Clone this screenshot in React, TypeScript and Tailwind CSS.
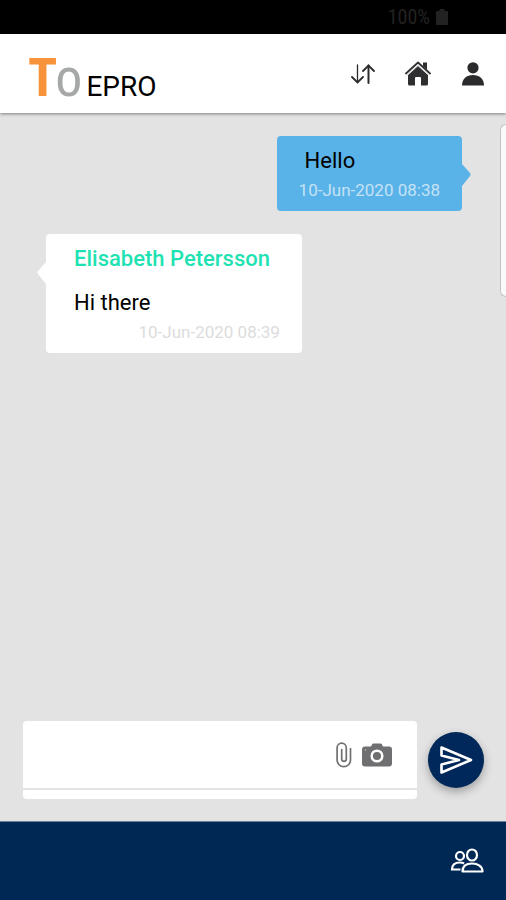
import { useState } from "react";

type Message = {
  id: number;
  text: string;
  sentAt: string;
  author?: string;
};

const messages: Message[] = [
  { id: 1, text: "Hello", sentAt: "10-Jun-2020 08:38" },
  { id: 2, text: "Hi there", sentAt: "10-Jun-2020 08:39", author: "Elisabeth Petersson" },
];

export default function App() {
  const [draft, setDraft] = useState("");

  return (
    <div className="flex min-h-screen flex-col bg-[#e3e3e3] font-[Roboto,sans-serif] text-black">
      <StatusBar />
      <Header />

      <main className="relative flex flex-1 flex-col pt-[23px]">
        <ul className="flex flex-1 flex-col gap-[23px] pr-11 pl-[46px]">
          {messages.map((m) =>
            m.author ? <Received key={m.id} message={m} /> : <Sent key={m.id} message={m} />
          )}
        </ul>

        {/* edge panel handle */}
        <div className="absolute top-[11px] right-0 h-[173px] w-1.5 rounded-l-md border border-r-0 border-[#c4c4c4] bg-[#fafafa]" />

        <form
          className="flex items-center gap-[11px] pr-[22px] pb-[22px] pl-[23px]"
          onSubmit={(e) => {
            e.preventDefault();
            setDraft("");
          }}
        >
          <div className="min-w-0 flex-1 rounded bg-white pb-[9px]">
            <div className="flex h-[69px] items-center gap-2 border-b-2 border-[#e3e3e3] pr-6 pl-4">
              <input
                type="text"
                aria-label="Message"
                value={draft}
                onChange={(e) => setDraft(e.target.value)}
                className="min-w-0 flex-1 bg-transparent text-[22px] outline-none"
              />
              <button type="button" aria-label="Attach file">
                <ClipIcon />
              </button>
              <button type="button" aria-label="Take photo">
                <CameraIcon />
              </button>
            </div>
          </div>
          <button
            type="submit"
            aria-label="Send"
            className="flex size-14 shrink-0 items-center justify-center rounded-full bg-[#00285a] shadow-[0_4px_10px_rgba(0,0,0,0.3)]"
          >
            <SendIcon />
          </button>
        </form>
      </main>

      <footer className="flex h-[79px] items-center justify-end border-t border-[#6b7f9b] bg-[#002855] pr-[22px]">
        <button type="button" aria-label="Participants">
          <GroupIcon />
        </button>
      </footer>
    </div>
  );
}

function StatusBar() {
  return (
    <div className="flex h-[34px] items-center justify-end gap-1.5 bg-black pr-[58px] text-[#222222]">
      <span className="font-['Roboto_Condensed',Roboto,sans-serif] text-[20px] leading-6">
        100%
      </span>
      <svg width="12" height="16" viewBox="0 0 12 16" fill="currentColor" aria-hidden="true">
        <path d="M3.5 0h5v2H11a1 1 0 0 1 1 1v12a1 1 0 0 1-1 1H1a1 1 0 0 1-1-1V3a1 1 0 0 1 1-1h2.5z" />
      </svg>
    </div>
  );
}

function Header() {
  return (
    <header className="z-10 flex h-[79px] items-center justify-between bg-white pr-[21px] pl-7 shadow-[0_1px_3px_rgba(0,0,0,0.45)]">
      <h1 className="flex items-baseline gap-1 pt-2">
        <span className="flex items-baseline font-['Roboto_Condensed',Roboto,sans-serif] text-[54px] leading-[54px] font-bold">
          <span className="text-[#f7933a]">T</span>
          <span className="-ml-0.5 font-normal text-[#a6a8a8]">o</span>
        </span>
        <span className="text-[28px] leading-8">EPRO</span>
      </h1>
      <nav className="flex items-center gap-[30px]">
        <button type="button" aria-label="Sync">
          <SortIcon />
        </button>
        <button type="button" aria-label="Home">
          <HomeIcon />
        </button>
        <button type="button" aria-label="Profile">
          <PersonIcon />
        </button>
      </nav>
    </header>
  );
}

function Sent({ message }: { message: Message }) {
  return (
    <li className="relative self-end rounded bg-[#5ab3e8] px-[22px] pt-3 pb-2.5">
      <p className="pl-1.5 text-[22px] leading-[26px]">{message.text}</p>
      <p className="pt-[5px] text-[17px] leading-[22px] text-[#c5e2f5]">{message.sentAt}</p>
      <svg
        className="absolute top-7 left-full"
        width="10"
        height="22"
        viewBox="0 0 10 22"
        aria-hidden="true"
      >
        <path d="M0 0L8 9q1.500 1.500 0 3L0 22z" fill="#5ab3e8" />
      </svg>
    </li>
  );
}

function Received({ message }: { message: Message }) {
  return (
    <li className="relative self-start rounded bg-white pt-3 pr-8 pb-2.5 pl-7">
      <p className="text-[22px] leading-[26px] font-medium text-[#1fe2b2]">{message.author}</p>
      <p className="pt-[18px] text-[22px] leading-[26px]">{message.text}</p>
      <p className="-mr-2.5 pt-[5px] text-right text-[17px] leading-[22px] text-[#dcdcdc]">
        {message.sentAt}
      </p>
      <svg
        className="absolute top-7 right-full"
        width="10"
        height="22"
        viewBox="0 0 10 22"
        aria-hidden="true"
      >
        <path d="M10 0L2 9q-1.500 1.500 0 3L10 22z" fill="white" />
      </svg>
    </li>
  );
}

function SortIcon() {
  return (
    <svg width="24" height="20" viewBox="0 0 24 20" fill="none" stroke="#2b2b2b" strokeLinecap="round">
      <path d="M6.5 1v17.5" strokeWidth="1.3" />
      <path d="M1 13l5.500 5.500 5.500-5.500" strokeWidth="1.800" />
      <path d="M12 7l5.500-5.500L23 7" strokeWidth="1.800" />
      <path d="M17.500 1.500V19" strokeWidth="2" />
    </svg>
  );
}

function HomeIcon() {
  return (
    <svg width="26" height="25" viewBox="0 0 26 25">
      <g fill="#2f2f31">
        <path d="M18 1.500h4V9l-4-4z" />
        <path d="M13 5L3 14V23q0 1.500 1.500 1.500H10V17q0-1 1-1h4q1 0 1 1v7.500h5.500q1.500 0 1.500-1.500v-9z" />
      </g>
      <path
        d="M1 12.500L13 1.500l12 11"
        fill="none"
        stroke="#2f2f31"
        strokeWidth="1.800"
        strokeLinecap="round"
        strokeLinejoin="round"
      />
      <path d="M2 14L13 4l11 10" fill="none" stroke="#dddddd" strokeWidth="1.100" />
    </svg>
  );
}

function PersonIcon() {
  return (
    <svg width="24" height="24" viewBox="0 0 24 24" fill="#2b2b2d">
      <circle cx="12" cy="5.800" r="5.600" />
      <path d="M1 23.500c0-6.500 4.500-10.500 11-10.500s11 4 11 10.500z" />
    </svg>
  );
}

function ClipIcon() {
  return (
    <svg
      width="18"
      height="26"
      viewBox="0 0 18 26"
      fill="none"
      stroke="#707070"
      strokeWidth="1.700"
      strokeLinecap="round"
    >
      <path d="M15.500 6.500v11.500a6.700 6.700 0 0 1-13.400 0V5.800a4.600 4.600 0 0 1 9.200 0V17a2.300 2.300 0 0 1-4.600 0V7.500" />
    </svg>
  );
}

function CameraIcon() {
  return (
    <svg width="32" height="24" viewBox="0 0 32 24" fill="#6f6f71">
      <path d="M4 3.500h6l1-2Q11.500.5 12.500.5h7q1 0 1.500 1l1 2h6q3 0 3 3V20.500q0 3-3 3H4q-3 0-3-3V6.500q0-3 3-3z" />
      <circle cx="16" cy="13" r="5.300" fill="none" stroke="white" strokeWidth="2.500" />
      <circle cx="4.500" cy="7" r=".8" fill="#bbbbbb" />
    </svg>
  );
}

function SendIcon() {
  return (
    <svg
      width="34"
      height="30"
      viewBox="0 0 34 30"
      fill="none"
      stroke="white"
      strokeWidth="2.600"
      strokeLinejoin="round"
    >
      <path d="M2.500 2.500L32 15 2.500 27.500V19.500L20 15 2.500 10.500z" />
    </svg>
  );
}

function GroupIcon() {
  return (
    <svg width="34" height="26" viewBox="0 0 34 26" fill="none" stroke="white" strokeWidth="2.200">
      <circle cx="10" cy="8" r="4" />
      <path d="M10.500 21.500H2c0-4.500 3-7 8-7 1.500 0 3 .3 4 1" />
      <ellipse cx="22" cy="7" rx="5" ry="5.500" />
      <path d="M12.500 23.500c0-5 3.500-8 9.500-8s10.500 3 10.500 8z" strokeLinejoin="round" />
    </svg>
  );
}
